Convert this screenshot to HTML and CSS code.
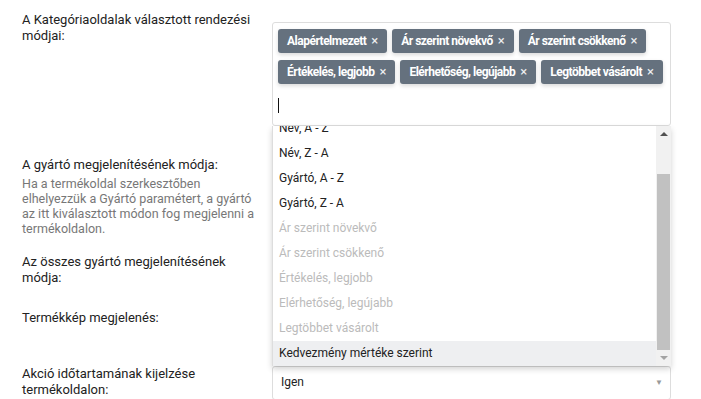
FILE: index.html
```html
<!DOCTYPE html>
<html lang="hu">
<head>
  <meta charset="UTF-8" />
  <title>Beállítások</title>
  <meta name="viewport" content="width=device-width, initial-scale=1" />
  <link rel="stylesheet" href="styles.css">
</head>
<body>

  <div class="settings">

    <div class="row row-first">
      <label class="label">A Kategóriaoldalak választott rendezési módjai:</label>
      <div class="field">
        <div class="multi">
          <div class="tags">
            <span class="tag">Alapértelmezett <span class="x">×</span></span>
            <span class="tag">Ár szerint növekvő <span class="x">×</span></span>
            <span class="tag">Ár szerint csökkenő <span class="x">×</span></span>
            <span class="tag">Értékelés, legjobb <span class="x">×</span></span>
            <span class="tag">Elérhetőség, legújabb <span class="x">×</span></span>
            <span class="tag">Legtöbbet vásárolt <span class="x">×</span></span>
          </div>
          <div class="search"><span class="caret"></span></div>
        </div>

        <div class="dropdown">
          <div class="dropdown-list">
            <ul class="options">
              <li class="disabled">Alapértelmezett</li>
              <li>Név, A - Z</li>
              <li>Név, Z - A</li>
              <li>Gyártó, A - Z</li>
              <li>Gyártó, Z - A</li>
              <li class="disabled">Ár szerint növekvő</li>
              <li class="disabled">Ár szerint csökkenő</li>
              <li class="disabled">Értékelés, legjobb</li>
              <li class="disabled">Elérhetőség, legújabb</li>
              <li class="disabled">Legtöbbet vásárolt</li>
              <li class="active">Kedvezmény mértéke szerint</li>
            </ul>
          </div>
          <div class="scrollbar">
            <span class="sb-btn sb-up"></span>
            <div class="sb-track"><span class="sb-thumb"></span></div>
            <span class="sb-btn sb-down"></span>
          </div>
        </div>
      </div>
    </div>

    <div class="row row-help">
      <div class="label">
        A gyártó megjelenítésének módja:
        <p class="help">Ha a termékoldal szerkesztőben elhelyezzük a Gyártó paramétert, a gyártó az itt kiválasztott módon fog megjelenni a termékoldalon.</p>
      </div>
      <div class="field"><div class="select">Név<span class="arrow">▼</span></div></div>
    </div>

    <div class="row">
      <label class="label">Az összes gyártó megjelenítésének módja:</label>
      <div class="field"><div class="select">Név<span class="arrow">▼</span></div></div>
    </div>

    <div class="row">
      <label class="label">Termékkép megjelenés:</label>
      <div class="field"><div class="select">Normál<span class="arrow">▼</span></div></div>
    </div>

    <div class="row">
      <label class="label">Akció időtartamának kijelzése termékoldalon:</label>
      <div class="field"><div class="select">Igen<span class="arrow">▼</span></div></div>
    </div>

  </div>

</body>
</html>
```

FILE: styles.css
```css
html, body {
  margin: 0;
  background: #fff;
  color: #222;
  font-family: Roboto, 'Liberation Sans', sans-serif;
  font-size: 13px;
  line-height: 16px;
  overflow: hidden;
}
.settings {
  padding: 12px 30px 0 22px;
}
.row {
  display: grid;
  grid-template-columns: 240px 1fr;
  column-gap: 10px;
  margin-bottom: 22px;
  align-items: start;
}
.row-first {
  margin-bottom: 31px;
}
.row-help {
  margin-bottom: 18px;
}
.label {
  display: block;
}
.help {
  margin: 3px 0 0;
  color: #777;
  font-size: 12.5px;
  line-height: 15px;
}
.field {
  position: relative;
}
.row-first .field {
  margin-top: 10px;
}
.multi {
  border: 1px solid #ddd;
  border-radius: 3px;
  padding: 6px 5px 0;
  height: 104px;
  box-sizing: border-box;
  background: #fff;
}
.tags {
  display: flex;
  flex-wrap: wrap;
  gap: 7px 5px;
}
.tag {
  display: inline-flex;
  align-items: center;
  height: 24px;
  padding: 0 9px;
  background: #65717e;
  color: #fff;
  font-size: 12px;
  font-weight: 700;
  letter-spacing: -0.5px;
  border-radius: 3px;
  box-shadow: 0 2px 4px rgba(0, 0, 0, 0.15);
}
.tag .x {
  margin-left: 5px;
  font-weight: 400;
  font-size: 13px;
  letter-spacing: 0;
  opacity: 0.9;
}
.search {
  height: 28px;
  padding-top: 14px;
  box-sizing: border-box;
}
.caret {
  display: block;
  width: 1px;
  height: 15px;
  background: #111;
}
.dropdown {
  position: absolute;
  left: 0;
  right: 0;
  top: 104px;
  z-index: 5;
  display: flex;
  height: 240px;
  background: #fff;
  border-left: 1px solid #ddd;
  box-shadow: 0 3px 6px rgba(0, 0, 0, 0.18);
}
.dropdown-list {
  flex: 1;
  display: flex;
  flex-direction: column;
  justify-content: flex-end;
  overflow: hidden;
}
.options {
  list-style: none;
  margin: 0;
  padding: 0;
  font-size: 12px;
}
.options li {
  height: 25px;
  line-height: 25px;
  padding-left: 6px;
  white-space: nowrap;
}
.options li.disabled {
  color: #bbb;
}
.options li.active {
  background: #eeeff1;
}
.scrollbar {
  width: 15px;
  display: flex;
  flex-direction: column;
  background: #f1f1f1;
}
.sb-btn {
  position: relative;
  height: 15px;
}
.sb-btn::after {
  content: '';
  position: absolute;
  left: 4px;
  border-left: 4px solid transparent;
  border-right: 4px solid transparent;
}
.sb-up::after {
  top: 6px;
  border-bottom: 4px solid #505050;
}
.sb-down::after {
  top: 5px;
  border-top: 4px solid #a3a3a3;
}
.sb-track {
  flex: 1;
  display: flex;
  flex-direction: column;
  justify-content: flex-end;
}
.sb-thumb {
  height: 176px;
  margin: 0 1px 1px;
  background: #c1c1c1;
}
.select {
  position: relative;
  height: 34px;
  line-height: 31px;
  border: 1px solid #ddd;
  border-radius: 3px;
  padding-left: 8px;
  box-sizing: border-box;
  font-size: 12px;
}
.arrow {
  position: absolute;
  right: 7px;
  top: 0;
  font-size: 8px;
  color: #999;
}
```
